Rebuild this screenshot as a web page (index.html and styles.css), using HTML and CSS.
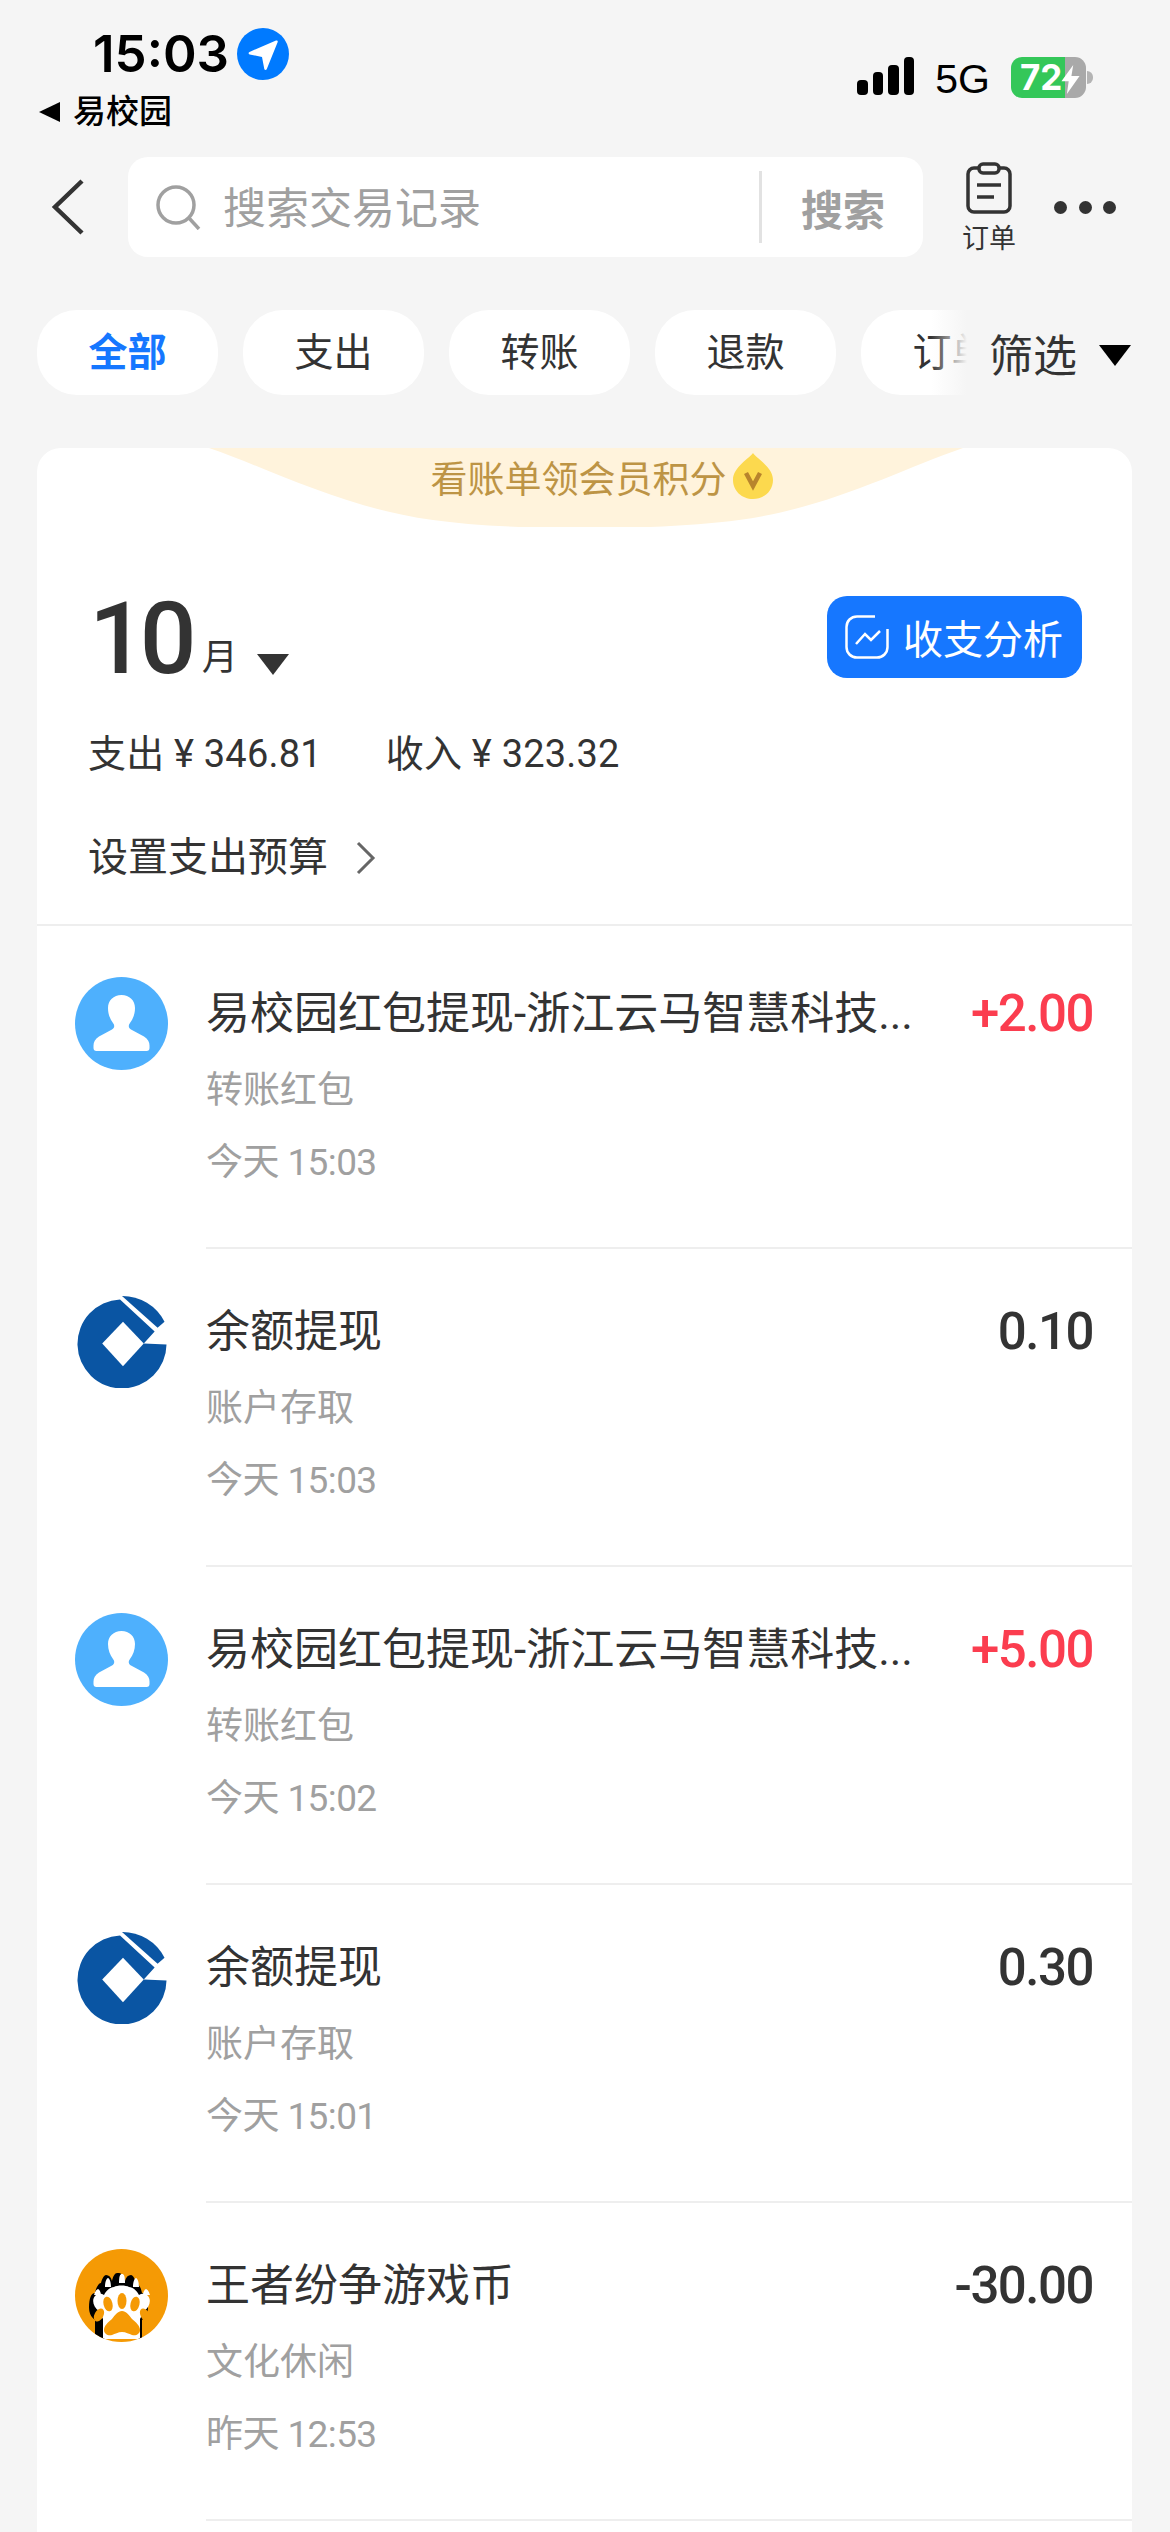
FILE: index.html
```html
<!DOCTYPE html>
<html lang="zh-CN">
<head>
  <meta charset="UTF-8" />
  <meta name="viewport" content="width=device-width, initial-scale=1.0" />
  <title>账单</title>
  <link rel="stylesheet" href="styles.css">
</head>
<body>
  <svg class="defs" width="0" height="0">
    <symbol id="person" viewBox="0 0 93 93">
      <circle cx="46.500" cy="46.500" r="46.500" fill="#4eb0fd"/>
      <path fill="#fff" d="M46.500 18c-8 0-13.500 5.500-13.500 13 0 6 2 11 5 15 2 2.500 1.500 5-1 6.500l-13 7c-4 2.500-5.500 5.500-5.500 9v2.500c0 2 1 3 3 3h50c2 0 3-1 3-3v-2.500c0-3.500-1.500-6.500-5.500-9l-13-7c-2.500-1.500-3-4-1-6.500 3-4 5-9 5-15 0-7.500-5.500-13-13.500-13z"/>
    </symbol>
    <symbol id="bank" viewBox="13 16 93 94">
      <path fill="#0a55a3" d="M58 20.500 93 53 82 65 105 66A45 45 0 1 1 58 20.500z"/>
      <path fill="#fff" d="M61 43 40 65 61 88 82 65z"/>
      <path fill="#0a55a3" d="M60 17A48 48 0 0 1 103 43L96 49z"/>
    </symbol>
    <symbol id="paw" viewBox="0 0 93 93">
      <clipPath id="pawClip"><circle cx="46.500" cy="46.500" r="46.500"/></clipPath>
      <g clip-path="url(#pawClip)">
        <rect width="93" height="93" fill="#f59a05"/>
        <path fill="#000" d="M14 58c0-8 2-14 6-14 1-6 4-10 6-10 1-4 3-8 5-8 3 0 5 2 6 6 1-5 3-8 5-8h2c3 0 5 4 6 8 1-4 3-6 6-6 2 0 4 4 5 8 2 0 5 4 6 10 4 0 6 6 6 14 0 6-2 10-6 13v19H20V71c-4-3-6-7-6-13z"/>
        <g fill="#fff">
          <path d="M19 46c1-4 3-6 4-6 1 0 3 3 3 6zM30 38c0-6 2-9 3-9s3 3 3 9zM44 34c0-7 1-9 3-9s3 2 3 9zM58 38c0-6 2-9 3-9s3 3 3 9zM68 46c0-3 2-6 3-6s3 2 4 6z"/>
          <path d="M24 62c-6-4-8-12-3-16 3-2 6-1 8 0 2-4 6-8 10-8 3-2 12-2 15 0 4 0 8 4 10 8 2-1 5-2 8 0 5 4 3 12-3 16-1 3-3 6-4 8v20H28V70c-1-2-3-5-4-8z"/>
        </g>
        <g fill="#f59a05">
          <ellipse cx="24" cy="66" rx="4.500" ry="7" transform="rotate(28 24 66)"/>
          <ellipse cx="33" cy="55" rx="4.500" ry="7.500" transform="rotate(-14 33 55)"/>
          <ellipse cx="47" cy="52" rx="4.500" ry="8"/>
          <ellipse cx="60" cy="55" rx="4.500" ry="7.500" transform="rotate(14 60 55)"/>
          <ellipse cx="70" cy="66" rx="4.500" ry="7" transform="rotate(-28 70 66)"/>
          <path d="M47 62c4 0 7 4 10 8 4 3 8 7 8 11 0 4-4 6-8 5-3-1-6-3-10-3s-7 2-10 3c-4 1-8-1-8-5 0-4 4-8 8-11 3-4 6-8 10-8z"/>
        </g>
      </g>
    </symbol>
  </svg>

  <div class="status">
    <div class="status-left">
      <div class="time-row">
        <span class="time">15:03</span>
        <svg class="loc" viewBox="0 0 52 52">
          <circle cx="26" cy="26" r="26" fill="#007aff"/>
          <path fill="#fff" d="M39 12.500c1.200-.4 2 .4 1.700 1.500L29.800 41c-.5 1.300-2.200 1.200-2.500-.1l-2.300-12-12.300-2.500c-1.400-.3-1.500-2-.2-2.500z"/>
        </svg>
      </div>
      <div class="back-app">
        <span class="back-tri"></span>
        <span>易校园</span>
      </div>
    </div>
    <div class="status-right">
      <div class="signal"><i></i><i></i><i></i><i></i></div>
      <span class="net">5G</span>
      <div class="battery">
        <span class="battery-num">72</span>
        <svg class="bolt" viewBox="0 0 20 32"><path fill="#fff" d="M13 0 0 18h8L6 32 20 12h-9z"/></svg>
      </div>
    </div>
  </div>

  <div class="searchbar">
    <svg class="back" viewBox="0 0 33 56"><path d="M31 2 4 28l27 26" fill="none" stroke="#333" stroke-width="4.500"/></svg>
    <div class="search">
      <svg class="search-icon" viewBox="0 0 45 45"><circle cx="20" cy="20" r="18" fill="none" stroke="#a0a0a0" stroke-width="3.500"/><path d="m33 33 10 11" fill="none" stroke="#a0a0a0" stroke-width="3.500"/></svg>
      <span class="search-ph">搜索交易记录</span>
      <span class="search-btn">搜索</span>
    </div>
    <div class="order">
      <svg class="order-icon" viewBox="0 0 46 52">
        <rect x="2" y="6" width="42" height="44" rx="6" fill="none" stroke="#333" stroke-width="3.500"/>
        <rect x="13" y="2" width="20" height="9" rx="4" fill="#f5f5f5" stroke="#333" stroke-width="3.500"/>
        <path d="M11 23h24M11 35h17" stroke="#333" stroke-width="3.500"/>
      </svg>
      <span class="order-text">订单</span>
    </div>
    <div class="more"><i></i><i></i><i></i></div>
  </div>

  <div class="filterbar">
    <div class="tabs">
      <span class="tab tab-on">全部</span>
      <span class="tab">支出</span>
      <span class="tab">转账</span>
      <span class="tab">退款</span>
      <span class="tab">订单</span>
    </div>
    <div class="filter">筛选<span class="filter-tri"></span></div>
  </div>

  <div class="card">
    <div class="banner">
      <svg class="banner-bg" viewBox="0 0 754 79" preserveAspectRatio="none"><path fill="#fff3dc" d="M0 0H754C690 22 620 60 530 72 450 83 300 83 224 72 134 60 64 22 0 0z"/></svg>
      <span class="banner-text">看账单领会员积分</span>
      <svg class="coin" viewBox="0 0 40 46">
        <path fill="#fcd94e" d="M20 0c3 5 20 14 20 27 0 11-9 19-20 19S0 38 0 27C0 14 17 5 20 0z"/>
        <path d="m13 20 7 13 7-13" fill="none" stroke="#b8842c" stroke-width="4.500"/>
      </svg>
    </div>

    <div class="summary">
      <div class="month-row">
        <div class="month">
          <span class="month-num">10</span>
          <span class="month-unit">月</span>
          <span class="month-tri"></span>
        </div>
        <div class="analysis">
          <svg class="analysis-icon" viewBox="0 0 44 44" fill="none" stroke="#fff" stroke-width="2.500">
            <path d="M30 1.500H12C6 1.500 1.500 6 1.500 12v20c0 6 4.500 10.500 10.500 10.500h20c6 0 10.500-4.500 10.500-10.500V14"/>
            <path d="m11 29 9-10 6 6 9-9"/>
          </svg>
          <span>收支分析</span>
        </div>
      </div>
      <div class="stats">
        <span>支出 ¥ 346.81</span>
        <span>收入 ¥ 323.32</span>
      </div>
      <div class="budget">
        <span>设置支出预算</span>
        <svg class="budget-arrow" viewBox="0 0 20 34"><path d="m2 2 15 15L2 32" fill="none" stroke="#666" stroke-width="3"/></svg>
      </div>
    </div>

    <div class="list">
      <div class="row">
        <svg class="avatar"><use href="#person"/></svg>
        <div class="row-body">
          <div class="row-top"><span class="title">易校园红包提现-浙江云马智慧科技...</span><span class="amount amount-in">+2.00</span></div>
          <div class="sub">转账红包</div>
          <div class="date">今天 15:03</div>
        </div>
      </div>
      <div class="row">
        <svg class="avatar"><use href="#bank"/></svg>
        <div class="row-body">
          <div class="row-top"><span class="title">余额提现</span><span class="amount">0.10</span></div>
          <div class="sub">账户存取</div>
          <div class="date">今天 15:03</div>
        </div>
      </div>
      <div class="row">
        <svg class="avatar"><use href="#person"/></svg>
        <div class="row-body">
          <div class="row-top"><span class="title">易校园红包提现-浙江云马智慧科技...</span><span class="amount amount-in">+5.00</span></div>
          <div class="sub">转账红包</div>
          <div class="date">今天 15:02</div>
        </div>
      </div>
      <div class="row">
        <svg class="avatar"><use href="#bank"/></svg>
        <div class="row-body">
          <div class="row-top"><span class="title">余额提现</span><span class="amount">0.30</span></div>
          <div class="sub">账户存取</div>
          <div class="date">今天 15:01</div>
        </div>
      </div>
      <div class="row">
        <svg class="avatar"><use href="#paw"/></svg>
        <div class="row-body">
          <div class="row-top"><span class="title">王者纷争游戏币</span><span class="amount">-30.00</span></div>
          <div class="sub">文化休闲</div>
          <div class="date">昨天 12:53</div>
        </div>
      </div>
    </div>
  </div>
</body>
</html>
```

FILE: styles.css
```css
* {
  box-sizing: border-box;
}

html, body {
  margin: 0;
  padding: 0;
}

body {
  display: flex;
  flex-direction: column;
  width: 1170px;
  height: 2532px;
  overflow: hidden;
  background: #f5f5f5;
  color: #333;
  font-family: Roboto, "Noto Sans CJK SC", sans-serif;
}

.defs {
  display: block;
  flex: none;
  height: 0;
}

/* status bar */
.status {
  flex: none;
  display: flex;
  justify-content: space-between;
  height: 157px;
  padding: 28px 84px 0 39px;
}

.time-row {
  display: flex;
  align-items: center;
  gap: 8px;
  height: 52px;
  margin-left: 54px;
}

.time {
  font-family: Inter, sans-serif;
  font-size: 51px;
  font-weight: 600;
  line-height: 52px;
  color: #000;
}

.loc {
  width: 52px;
  height: 52px;
}

.back-app {
  display: flex;
  align-items: center;
  gap: 13px;
  margin-top: 15px;
  font-size: 33px;
  font-weight: 500;
  line-height: 34px;
  color: #000;
}

.back-tri {
  width: 0;
  height: 0;
  border-top: 10px solid transparent;
  border-bottom: 10px solid transparent;
  border-right: 21px solid #000;
}

.status-right {
  display: flex;
  align-items: flex-start;
  padding-top: 29px;
}

.signal {
  display: flex;
  align-items: flex-end;
  gap: 5px;
  height: 38px;
  margin-right: 21px;
}

.signal i {
  display: block;
  width: 10.500px;
  border-radius: 4px;
  background: #000;
}

.signal i:nth-child(1) { height: 15px; }
.signal i:nth-child(2) { height: 23px; }
.signal i:nth-child(3) { height: 30px; }
.signal i:nth-child(4) { height: 38px; }

.net {
  margin-right: 21px;
  font-family: "Liberation Sans", sans-serif;
  font-size: 41px;
  line-height: 44px;
  color: #000;
}

.battery {
  position: relative;
  display: flex;
  align-items: center;
  width: 75px;
  height: 41px;
  padding-left: 9px;
  border-radius: 11px;
  background: linear-gradient(90deg, #34c759 72%, #a9a9a9 72%);
}

.battery::after {
  content: "";
  position: absolute;
  right: -7px;
  top: 14px;
  width: 6px;
  height: 13px;
  border-radius: 0 6px 6px 0;
  background: #b4b4b4;
}

.battery-num {
  font-family: Inter, sans-serif;
  font-size: 35px;
  font-weight: 700;
  line-height: 41px;
  color: #fff;
}

.bolt {
  position: absolute;
  left: 50px;
  top: 8px;
  width: 19px;
  height: 29px;
}

/* search */
.searchbar {
  flex: none;
  display: flex;
  align-items: flex-start;
  height: 100px;
  padding-left: 51px;
}

.back {
  width: 33px;
  height: 56px;
  margin-top: 22px;
  margin-right: 44px;
}

.search {
  display: flex;
  align-items: center;
  width: 795px;
  height: 100px;
  padding-left: 28px;
  border-radius: 20px;
  background: #fff;
}

.search-icon {
  width: 45px;
  height: 45px;
  margin-right: 22px;
}

.search-ph {
  width: 536px;
  padding-top: 4px;
  font-size: 43px;
  line-height: 60px;
  color: #a0a0a0;
}

.search-btn {
  display: flex;
  align-items: center;
  height: 72px;
  padding-left: 39px;
  border-left: 3px solid #e2e2e2;
  font-size: 42px;
  font-weight: 700;
  color: #a0a0a0;
}

.order {
  display: flex;
  flex-direction: column;
  align-items: center;
  width: 54px;
  margin-left: 39px;
  padding-top: 5px;
}

.order-icon {
  width: 48px;
  height: 52px;
}

.order-text {
  margin-top: 10px;
  font-size: 27px;
  line-height: 30px;
  color: #333;
}

.more {
  display: flex;
  gap: 11.500px;
  margin-left: 38px;
  padding-top: 44px;
}

.more i {
  display: block;
  width: 13px;
  height: 13px;
  border-radius: 50%;
  background: #333;
}

/* tabs */
.filterbar {
  flex: none;
  display: flex;
  margin-top: 53px;
  padding-left: 37px;
}

.tabs {
  position: relative;
  display: flex;
  gap: 25px;
  width: 930px;
  overflow: hidden;
}

.tabs::after {
  content: "";
  position: absolute;
  right: 0;
  top: 0;
  width: 36px;
  height: 85px;
  background: linear-gradient(90deg, rgba(245, 245, 245, 0), #f5f5f5);
}

.tab {
  flex: none;
  width: 181px;
  height: 85px;
  border-radius: 40px;
  background: #fff;
  font-size: 39px;
  line-height: 87px;
  text-align: center;
  color: #333;
}

.tab-on {
  font-weight: 700;
  color: #1677ff;
}

.filter {
  display: flex;
  align-items: center;
  height: 85px;
  margin-left: 22px;
  font-size: 44px;
  color: #333;
}

.filter-tri {
  width: 0;
  height: 0;
  margin-left: 22px;
  margin-top: 6px;
  border-left: 16px solid transparent;
  border-right: 16px solid transparent;
  border-top: 21px solid #000;
}

/* card */
.card {
  flex: 1;
  margin: 53px 38px 0 37px;
  border-radius: 24px 24px 0 0;
  background: #fff;
}

.banner {
  position: relative;
  display: flex;
  justify-content: center;
  gap: 6px;
  height: 79px;
  padding-top: 5px;
  padding-left: 34px;
}

.banner-bg {
  position: absolute;
  left: 172px;
  top: 0;
  width: 754px;
  height: 79px;
}

.banner-text {
  position: relative;
  margin-top: 8px;
  font-size: 37px;
  line-height: 40px;
  color: #bd9445;
}

.coin {
  position: relative;
  width: 40px;
  height: 46px;
}

.summary {
  height: 399px;
  padding: 69px 50px 0 51px;
  border-bottom: 2px solid #eee;
}

.month-row {
  display: flex;
  justify-content: space-between;
  height: 82px;
}

.month {
  display: flex;
  align-items: flex-end;
  padding-left: 1px;
}

.month-num {
  font-size: 100px;
  font-weight: 500;
  line-height: 78px;
  letter-spacing: -6px;
  color: #333;
}

.month-unit {
  margin-left: 11px;
  font-size: 36px;
  line-height: 40px;
}

.month-tri {
  width: 0;
  height: 0;
  margin-left: 19px;
  margin-bottom: 3px;
  border-left: 16px solid transparent;
  border-right: 16px solid transparent;
  border-top: 21px solid #333;
}

.analysis {
  display: flex;
  align-items: center;
  gap: 14px;
  width: 255px;
  height: 82px;
  padding-left: 18px;
  border-radius: 20px;
  background: #1677ff;
  font-size: 40px;
  color: #fff;
}

.analysis-icon {
  width: 44px;
  height: 44px;
}

.stats {
  display: flex;
  gap: 64px;
  margin-top: 54px;
  font-size: 38px;
  line-height: 44px;
  letter-spacing: 0.200px;
}

.budget {
  display: flex;
  align-items: center;
  gap: 28px;
  margin-top: 60px;
  font-size: 40px;
  line-height: 44px;
}

.budget-arrow {
  width: 20px;
  height: 34px;
}

/* rows */
.list {
  padding-top: 5px;
}

.row {
  display: flex;
  height: 318px;
}

.avatar {
  flex: none;
  width: 93px;
  height: 93px;
  margin: 46px 38px 0 38px;
}

.row-body {
  flex: 1;
  padding: 61px 39px 0 0;
  border-bottom: 2px solid #eee;
}

.row-top {
  display: flex;
  justify-content: space-between;
  align-items: center;
  height: 44px;
}

.title {
  font-size: 44px;
  line-height: 44px;
  white-space: nowrap;
}

.amount {
  font-size: 51px;
  font-weight: 500;
  line-height: 44px;
  letter-spacing: -1.500px;
  color: #333;
}

.amount-in {
  color: #fb3d4f;
}

.sub {
  margin-top: 36px;
  font-size: 37px;
  line-height: 37px;
  color: #a0a0a0;
}

.date {
  margin-top: 35px;
  font-size: 37px;
  line-height: 37px;
  letter-spacing: -0.600px;
  color: #a0a0a0;
}
```
